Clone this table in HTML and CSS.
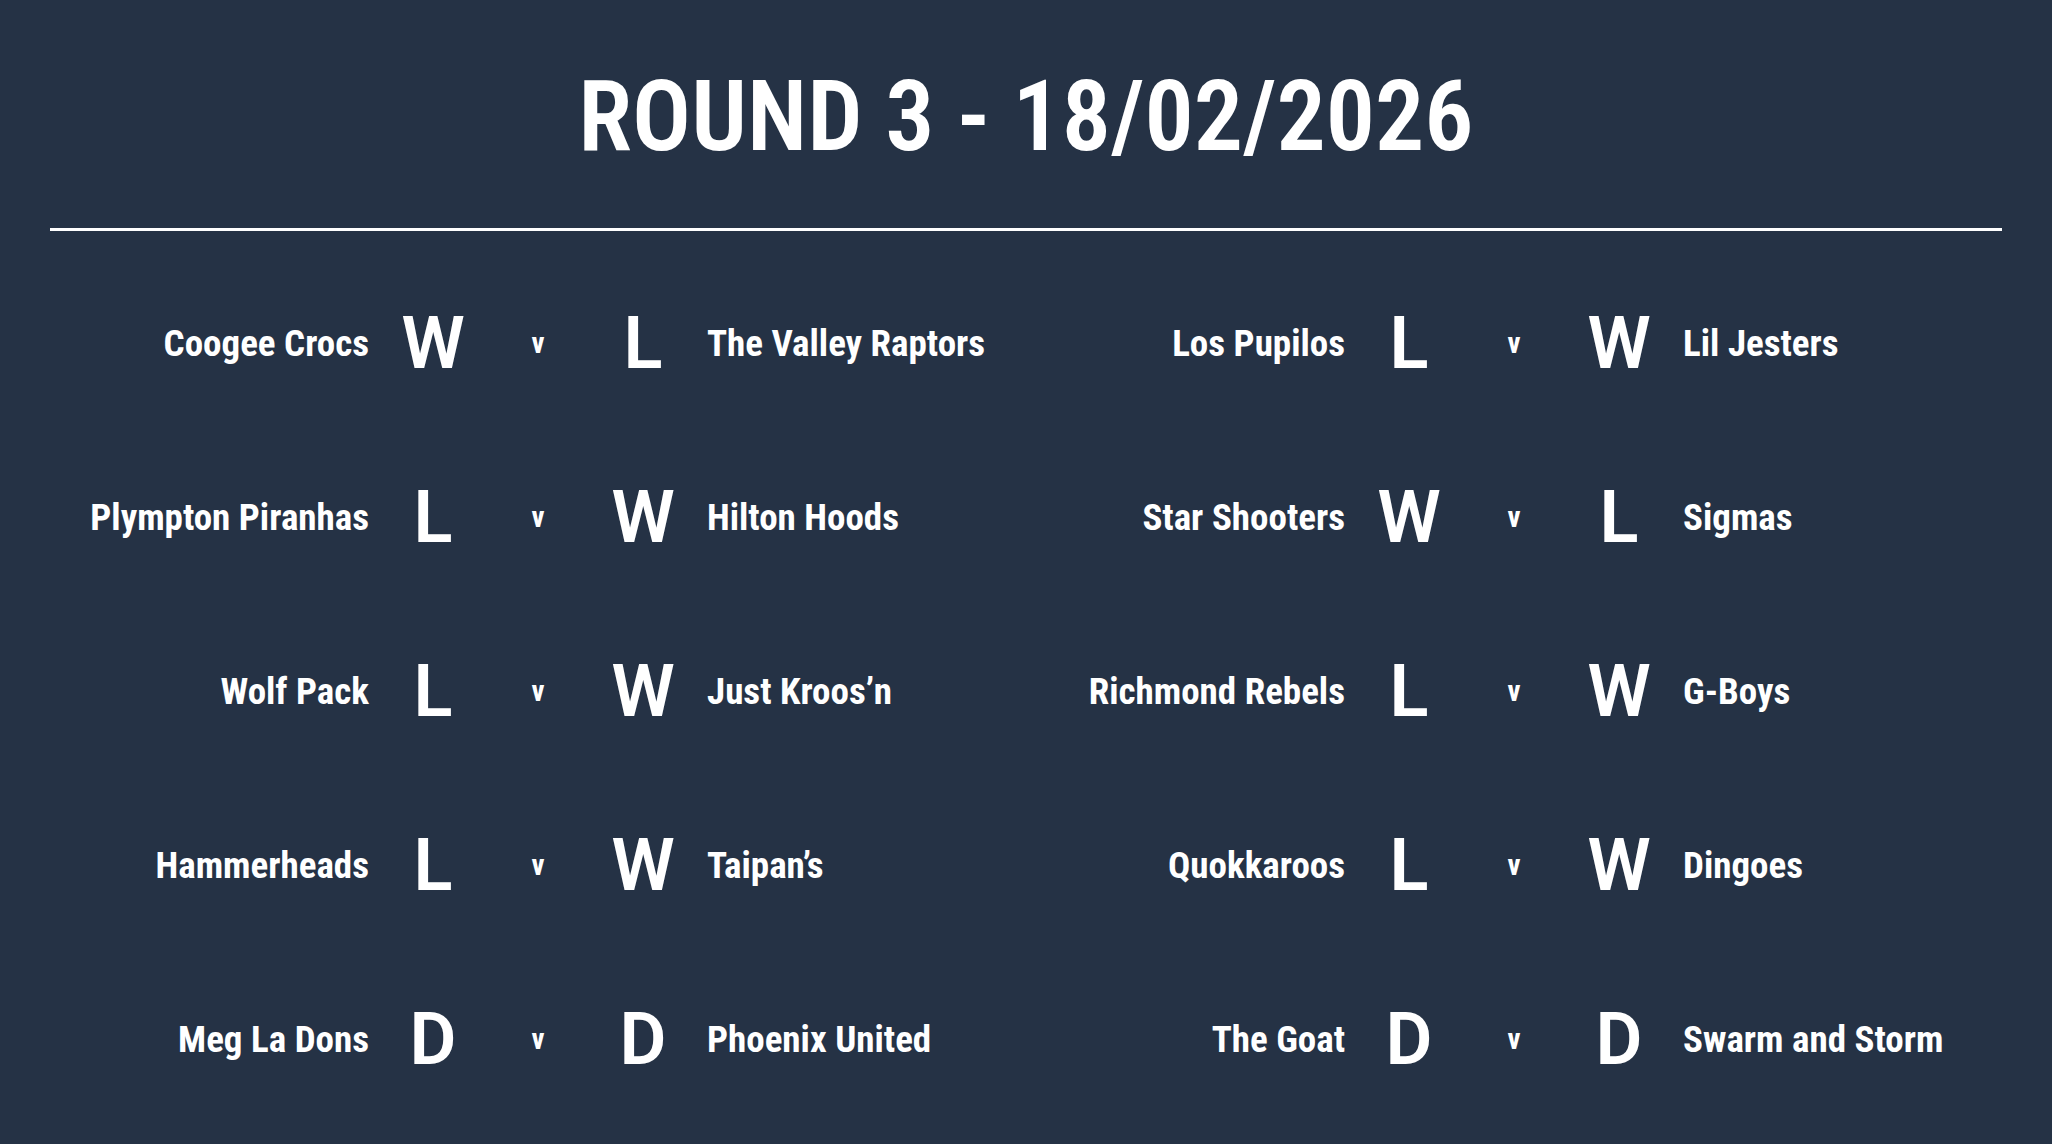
FILE: index.html
```html
<!DOCTYPE html>
<html lang="en">
<head>
<meta charset="utf-8">
<title>Round 3 - 18/02/2026</title>
<link rel="stylesheet" href="styles.css">
</head>
<body>
<div class="page">
  <header class="header">
    <h1 class="title">ROUND 3 - 18/02/2026</h1>
  </header>
  <hr class="rule">
  <main class="fixtures">
    <div class="match"><span class="team home">Coogee Crocs</span><span class="res">W</span><span class="vs">v</span><span class="res">L</span><span class="team away">The Valley Raptors</span></div>
    <div class="match"><span class="team home">Los Pupilos</span><span class="res">L</span><span class="vs">v</span><span class="res">W</span><span class="team away">Lil Jesters</span></div>
    <div class="match"><span class="team home">Plympton Piranhas</span><span class="res">L</span><span class="vs">v</span><span class="res">W</span><span class="team away">Hilton Hoods</span></div>
    <div class="match"><span class="team home">Star Shooters</span><span class="res">W</span><span class="vs">v</span><span class="res">L</span><span class="team away">Sigmas</span></div>
    <div class="match"><span class="team home">Wolf Pack</span><span class="res">L</span><span class="vs">v</span><span class="res">W</span><span class="team away">Just Kroos’n</span></div>
    <div class="match"><span class="team home">Richmond Rebels</span><span class="res">L</span><span class="vs">v</span><span class="res">W</span><span class="team away">G-Boys</span></div>
    <div class="match"><span class="team home">Hammerheads</span><span class="res">L</span><span class="vs">v</span><span class="res">W</span><span class="team away">Taipan’s</span></div>
    <div class="match"><span class="team home">Quokkaroos</span><span class="res">L</span><span class="vs">v</span><span class="res">W</span><span class="team away">Dingoes</span></div>
    <div class="match"><span class="team home">Meg La Dons</span><span class="res">D</span><span class="vs">v</span><span class="res">D</span><span class="team away">Phoenix United</span></div>
    <div class="match"><span class="team home">The Goat</span><span class="res">D</span><span class="vs">v</span><span class="res">D</span><span class="team away">Swarm and Storm</span></div>
  </main>
</div>
</body>
</html>
```
FILE: styles.css
```css
html, body {
  margin: 0;
  padding: 0;
  background: #253245;
}

body {
  color: #ffffff;
  font-family: "Roboto", "Roboto Condensed", sans-serif;
  font-stretch: 75%;
  width: 2052px;
  height: 1144px;
  overflow: hidden;
}

.page {
  padding: 0 50px;
}

.header {
  padding-top: 66px;
  display: flex;
  justify-content: center;
}

.title {
  margin: 0;
  font-size: 98px;
  line-height: 102px;
  font-weight: 600;
}

.rule {
  margin: 60px 0 0 0;
  border: 0;
  height: 3px;
  background: #ffffff;
}

.fixtures {
  margin-top: 25px;
  display: grid;
  grid-template-columns: minmax(0, 1fr) minmax(0, 1fr);
  grid-auto-rows: 174px;
}

.match {
  display: grid;
  grid-template-columns: minmax(0, 1fr) 128px 82px 128px minmax(0, 1fr);
  align-items: center;
}

.team {
  font-size: 37px;
  font-weight: 700;
  font-stretch: 78%;
  white-space: nowrap;
}

.home {
  text-align: right;
}

.away {
  text-align: left;
}

.res {
  text-align: center;
  font-size: 72px;
  font-weight: 600;
  font-stretch: 90%;
}

.vs {
  text-align: center;
  font-size: 29px;
  font-weight: 700;
}
```
